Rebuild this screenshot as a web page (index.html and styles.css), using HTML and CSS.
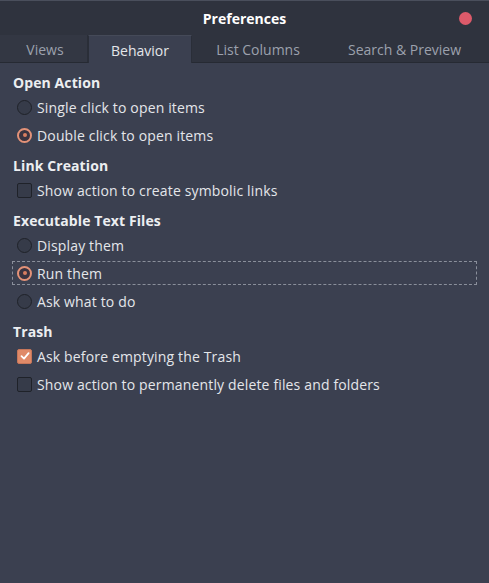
FILE: index.html
```html
<!DOCTYPE html>
<html>
<head>
<meta charset="utf-8">
<link rel="stylesheet" href="styles.css">
</head>
<body>
<div class="window">
  <div class="titlebar">
    <span class="title">Preferences</span>
    <span class="close"></span>
  </div>
  <div class="tabs">
    <div class="tab t-views">Views</div>
    <div class="tab active t-beh">Behavior</div>
    <div class="tab t-list">List Columns</div>
    <div class="tab t-search">Search &amp; Preview</div>
  </div>
  <div class="content">
    <div class="group">
      <div class="heading">Open Action</div>
      <div class="item"><span class="radio"></span>Single click to open items</div>
      <div class="item"><span class="radio on"></span>Double click to open items</div>
    </div>
    <div class="group">
      <div class="heading">Link Creation</div>
      <div class="item"><span class="check"></span>Show action to create symbolic links</div>
    </div>
    <div class="group">
      <div class="heading">Executable Text Files</div>
      <div class="item"><span class="radio"></span>Display them</div>
      <div class="item focus"><span class="radio on"></span>Run them</div>
      <div class="item"><span class="radio"></span>Ask what to do</div>
    </div>
    <div class="group">
      <div class="heading">Trash</div>
      <div class="item"><span class="check on"><svg viewBox="0 0 14 14" width="14" height="14"><path d="M3.5 7.2 L6 9.6 L10.6 4.2" fill="none" stroke="#fff" stroke-width="1.8" stroke-linecap="round" stroke-linejoin="round"/></svg></span>Ask before emptying the Trash</div>
      <div class="item"><span class="check"></span>Show action to permanently delete files and folders</div>
    </div>
  </div>
</div>
</body>
</html>
```
FILE: styles.css
```css
html, body {
  margin: 0;
  padding: 0;
  background: #3b4050;
}
.window {
  width: 489px;
  height: 583px;
  background: #3b4050;
  font-family: "Open Sans", "Noto Sans", sans-serif;
  color: #e4e6ea;
  display: flex;
  flex-direction: column;
  box-sizing: border-box;
}
.titlebar {
  height: 35px;
  background: #2f333e;
  display: flex;
  align-items: center;
  justify-content: center;
  position: relative;
  border-top: 1px solid #4a4f5c;
  box-sizing: border-box;
}
.title {
  font-weight: 700;
  font-size: 14px;
  color: #ffffff;
}
.close {
  position: absolute;
  right: 17px;
  top: 11px;
  width: 13px;
  height: 13px;
  border-radius: 50%;
  background: #dc5a6a;
}
.tabs {
  height: 27px;
  display: flex;
  background: #2f333e;
  border-bottom: 1px solid #262a33;
}
.tab {
  box-sizing: border-box;
  height: 27px;
  display: flex;
  align-items: center;
  justify-content: center;
  font-size: 14px;
  color: #9ca1ad;
  background: #333743;
  border-right: 1px solid #2a2e38;
  padding-top: 1px;
}
.tab.active {
  background: #3b4050;
  color: #e4e6ea;
  border-left: 1px solid #2a2e38;
  border-top: 1px solid #454a58;
  margin-bottom: -1px;
  height: 28px;
}
.t-views { width: 88px; padding-left: 3px; }
.t-beh { width: 104px; }
.t-list { width: 132px; background: #2f333e; border-right: none; }
.t-search { flex: 1; background: #2f333e; border-right: none; padding-right: 4px; }
.content {
  padding: 9px 12px 0 12px;
  display: flex;
  flex-direction: column;
  gap: 6px;
}
.heading {
  font-weight: 700;
  font-size: 14px;
  height: 21px;
  line-height: 21px;
  padding-left: 1px;
  color: #eceef1;
  letter-spacing: 0.1px;
}
.item {
  height: 28px;
  display: flex;
  align-items: center;
  font-size: 14px;
  color: #e4e6ea;
  padding-left: 5px;
  box-sizing: border-box;
  letter-spacing: 0.15px;
}
.item.focus {
  border: 1px dashed #8a8f9b;
  padding-left: 4px;
  height: 24px;
  margin-top: 2px;
  margin-bottom: 2px;
}
.radio {
  width: 15px;
  height: 15px;
  border-radius: 50%;
  border: 1px solid #1f2229;
  background: #363b49;
  box-sizing: border-box;
  margin-right: 5px;
  flex: none;
  position: relative;
}
.radio.on {
  border: 2px solid #e39278;
  background: #3a3340;
}
.radio.on::after {
  content: "";
  position: absolute;
  left: 3.5px;
  top: 3.5px;
  width: 4px;
  height: 4px;
  border-radius: 50%;
  background: #d87e60;
}
.check {
  width: 15px;
  height: 15px;
  border: 1px solid #1f2229;
  background: #363b49;
  box-sizing: border-box;
  margin-right: 5px;
  border-radius: 2px;
  flex: none;
  display: flex;
}
.check.on {
  background: #e08a68;
  border-color: #c6765a;
}
.check.on svg { margin: -0.5px; }
```
